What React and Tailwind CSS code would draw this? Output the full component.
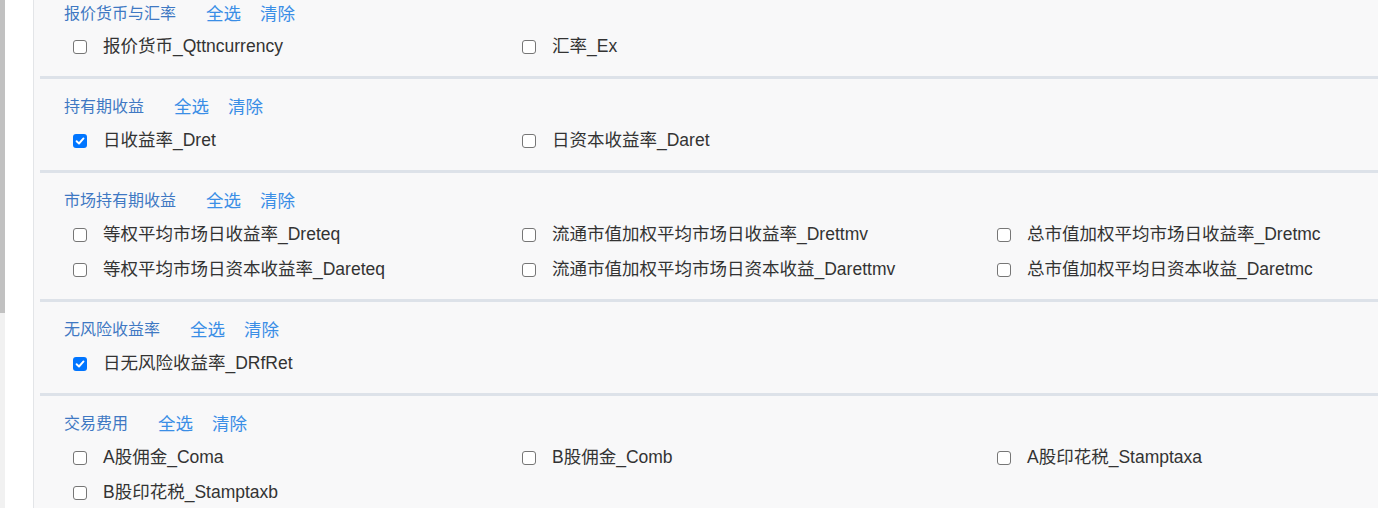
import React from "react";

const groups = [
  {
    title: "报价货币与汇率",
    items: [
      { label: "报价货币_Qttncurrency" },
      { label: "汇率_Ex" },
    ],
  },
  {
    title: "持有期收益",
    items: [
      { label: "日收益率_Dret", checked: true },
      { label: "日资本收益率_Daret" },
    ],
  },
  {
    title: "市场持有期收益",
    items: [
      { label: "等权平均市场日收益率_Dreteq" },
      { label: "流通市值加权平均市场日收益率_Drettmv" },
      { label: "总市值加权平均市场日收益率_Dretmc" },
      { label: "等权平均市场日资本收益率_Dareteq" },
      { label: "流通市值加权平均市场日资本收益_Darettmv" },
      { label: "总市值加权平均日资本收益_Daretmc" },
    ],
  },
  {
    title: "无风险收益率",
    items: [{ label: "日无风险收益率_DRfRet", checked: true }],
  },
  {
    title: "交易费用",
    items: [
      { label: "A股佣金_Coma" },
      { label: "B股佣金_Comb" },
      { label: "A股印花税_Stamptaxa" },
      { label: "B股印花税_Stamptaxb" },
    ],
  },
];

const Box = ({ checked }) =>
  checked ? (
    <span className="flex items-center justify-center w-[14px] h-[14px] rounded-[3px] bg-[#0075ff] shrink-0">
      <svg width="10" height="10" viewBox="0 0 10 10" fill="none">
        <path d="M1.6 5.2 L4 7.5 L8.5 2.4" stroke="white" strokeWidth="1.9" strokeLinecap="round" strokeLinejoin="round" />
      </svg>
    </span>
  ) : (
    <span className="block w-[14px] h-[14px] rounded-[3px] border-[1.5px] border-[#767676] bg-white shrink-0" />
  );

const FieldGroup = ({ group, first }) => (
  <div
    className={`ml-[6px] border-b-[3px] border-[#dde2e9] ${
      first ? "pt-[2px] pb-[12px]" : "pt-[16px] pb-[12px]"
    }`}
  >
    <div className="flex items-center h-[24px] pl-[24px]">
      <span className="text-[16px] text-[#3f78c3]">{group.title}</span>
      <a className="ml-[30px] text-[17.5px] text-[#3a8ee6] cursor-pointer">全选</a>
      <a className="ml-[19px] text-[17.5px] text-[#3a8ee6] cursor-pointer">清除</a>
    </div>
    <div className={`${first ? "mt-[3px]" : "mt-[4px]"} pl-[33px] grid grid-cols-[449px_475px_1fr]`}>
      {group.items.map((item, i) => (
        <label key={i} className="flex items-center h-[35px] whitespace-nowrap cursor-pointer">
          <Box checked={item.checked} />
          <span className="ml-[16px] text-[17.5px] text-[#333333]">{item.label}</span>
        </label>
      ))}
    </div>
  </div>
);

export default function App() {
  return (
    <div
      className="flex h-[508px] overflow-hidden bg-white"
      style={{ fontFamily: '"Liberation Sans", Arial, "Noto Sans CJK SC", sans-serif' }}
    >
      {/* scrollbar strip */}
      <div className="w-[5px] shrink-0 flex flex-col">
        <div className="h-[313px] bg-[#c1c1c1]" />
        <div className="flex-1 bg-[#f1f1f1]" />
      </div>
      <div className="w-[28px] shrink-0 bg-white" />
      <div className="flex-1 border-l border-[#e3e5e8] bg-[#f8f8f9] overflow-hidden">
        {groups.map((g, i) => (
          <FieldGroup key={i} group={g} first={i === 0} />
        ))}
      </div>
    </div>
  );
}
